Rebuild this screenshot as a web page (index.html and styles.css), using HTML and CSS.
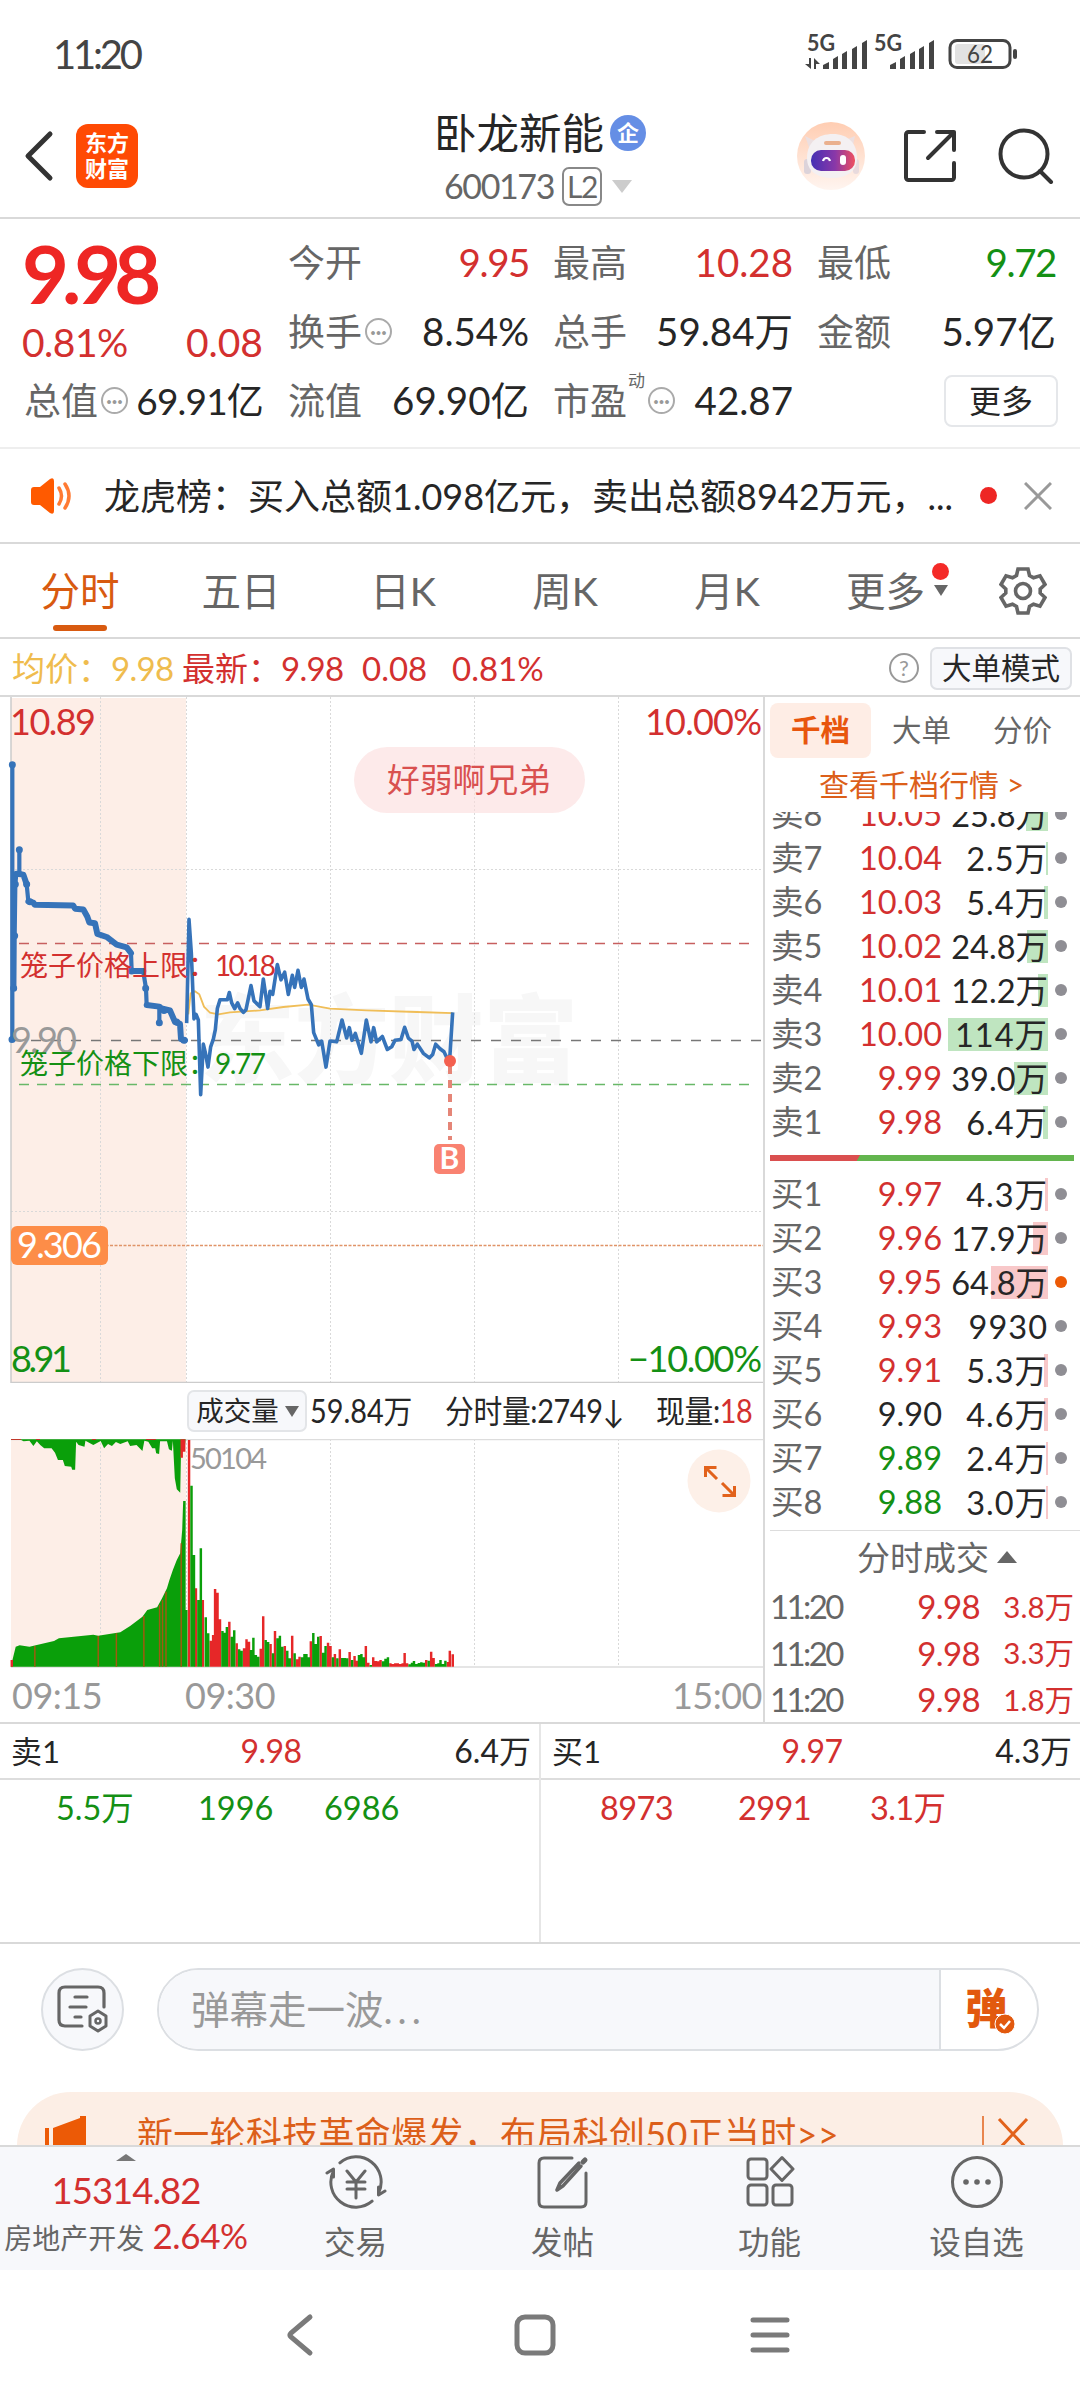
FILE: index.html
```html
<!DOCTYPE html>
<html lang="zh-CN">
<head>
  <meta charset="UTF-8" />
  <meta name="viewport" content="width=device-width, initial-scale=1.0"/>
  <title>卧龙新能 600173</title>
  <link rel="stylesheet" href="styles.css">
</head>
<body>

  <!-- Status bar -->
  <div class="status-bar">
    <span class="clock">11:20</span>
    <svg class="status-icons" width="216" height="40" viewBox="0 0 216 40" fill="#444">
      <text class="net" x="3" y="15" textLength="28" lengthAdjust="spacingAndGlyphs">5G</text>
      <path d="M1 28h4v-6h2v11zM10 33V22l6 6h-4v5z"/>
      <path d="M19 33v-4l6-3v7zM29 33V23l5-3v13zM38 33V18l5-3v18zM48 33V13l5-3v23zM58 33V7l5-3v29z"/>
      <text class="net" x="70" y="15" textLength="28" lengthAdjust="spacingAndGlyphs">5G</text>
      <path d="M86 33v-4l6-3v7zM96 33V23l5-3v13zM106 33V18l5-3v18zM115 33V13l5-3v23zM125 33V7l5-3v29z"/>
      <rect x="146" y="4.500" width="60" height="27" rx="7" fill="#fff" stroke="#444" stroke-width="3"/>
      <rect x="151" y="8" width="30" height="20" rx="3" fill="#e2e2e2"/>
      <rect x="209" y="13" width="4" height="10" rx="2"/>
      <text class="battery" x="163" y="27" textLength="26" lengthAdjust="spacingAndGlyphs">62</text>
    </svg>
  </div>

  <!-- Header -->
  <header class="header">
    <div class="header-left">
      <svg width="32" height="54" viewBox="0 0 32 54" fill="none" stroke="#333" stroke-width="5" stroke-linecap="round" stroke-linejoin="round"><path d="M27 5L5 27l22 22"/></svg>
      <div class="logo"><span>东方</span><span>财富</span></div>
    </div>
    <div class="header-title">
      <div class="stock-name">卧龙新能<span class="badge">企</span></div>
      <div class="stock-code">600173<span class="level">L2</span><i class="tri-down"></i></div>
    </div>
    <div class="header-right">
      <svg width="68" height="68" viewBox="0 0 68 68">
        <defs>
          <linearGradient id="halo" x1="0" y1="0" x2="0" y2="1"><stop offset="0" stop-color="#ffcdb2"/><stop offset="1" stop-color="#fff5f0"/></linearGradient>
          <linearGradient id="visor" x1="0" y1="0" x2="1" y2="0"><stop offset="0" stop-color="#4530b4"/><stop offset=".55" stop-color="#8a38a8"/><stop offset="1" stop-color="#ef5060"/></linearGradient>
        </defs>
        <circle cx="34" cy="34" r="34" fill="url(#halo)"/>
        <path d="M8 14l5 14 7-8zM58 14l-3 14-9-9z" fill="#ecdfe0"/>
        <rect x="7" y="37" width="7" height="15" rx="3" fill="#dcd3da"/>
        <rect x="56" y="37" width="6" height="15" rx="3" fill="#e8dadd"/>
        <path d="M10 36c0-16 11-24 26-24s24 9 24 24c0 13-10 20-25 20S10 49 10 36z" fill="#f4f0f2"/>
        <rect x="27" y="19" width="17" height="4" rx="2" fill="#eab08e"/>
        <rect x="14" y="28" width="44" height="21" rx="10" fill="url(#visor)"/>
        <path d="M26 39c1-4 6-4 7 0" fill="none" stroke="#fff" stroke-width="2.200"/>
        <rect x="43" y="33" width="6" height="10" rx="3" fill="#fff"/>
      </svg>
      <svg class="share" width="54" height="54" viewBox="0 0 54 54" fill="none" stroke="#333" stroke-width="4" stroke-linecap="round" stroke-linejoin="round">
        <path d="M21 3H5.500A2.500 2.500 0 0 0 3 5.500v43A2.500 2.500 0 0 0 5.500 51h43a2.500 2.500 0 0 0 2.500-2.500V34M34 3h17v18M51 3L25 29"/>
      </svg>
      <svg class="search" width="56" height="56" viewBox="0 0 56 56" fill="none" stroke="#333" stroke-width="4" stroke-linecap="round"><circle cx="26" cy="26" r="23.500"/><path d="M42 43l11 11"/></svg>
    </div>
  </header>

  <!-- Quote summary -->
  <section class="quote">
    <div class="quote-main">
      <div class="price">9.98</div>
      <div class="change"><span>0.81%</span><span>0.08</span></div>
      <div class="stat stat-total"><label>总值<i class="dots">···</i></label><b>69.91亿</b></div>
    </div>
    <div class="quote-grid">
      <div class="stat"><label>今开</label><b class="red short">9.95</b></div>
      <div class="stat"><label>最高</label><b class="red">10.28</b></div>
      <div class="stat"><label>最低</label><b class="green short">9.72</b></div>
      <div class="stat"><label>换手<i class="dots">···</i></label><b>8.54%</b></div>
      <div class="stat"><label>总手</label><b>59.84万</b></div>
      <div class="stat"><label>金额</label><b>5.97亿</b></div>
      <div class="stat"><label>流值</label><b>69.90亿</b></div>
      <div class="stat"><label>市盈<sup>动</sup><i class="dots">···</i></label><b>42.87</b></div>
      <div class="stat stat-end"><button class="more-btn">更多</button></div>
    </div>
  </section>

  <!-- News line -->
  <div class="news">
    <svg width="44" height="36" viewBox="0 0 44 36">
      <path d="M1 12q0-3 3-3h6L20 1q4-2 4 2v30q0 4-4 2l-10-8H4q-3 0-3-3z" fill="#ff5a00"/>
      <path d="M29 10q5 8 0 16M35 6q8 12 0 24" fill="none" stroke="#ff7a33" stroke-width="3.500" stroke-linecap="round"/>
    </svg>
    <span class="news-text">龙虎榜：买入总额1.098亿元，卖出总额8942万元，<i>...</i></span>
    <i class="red-dot"></i>
    <svg width="28" height="28" viewBox="0 0 28 28" stroke="#999" stroke-width="3"><path d="M1 1l26 26M27 1L1 27"/></svg>
  </div>

  <!-- Period tabs -->
  <nav class="tabs">
    <span class="tab tab-active">分时</span>
    <span class="tab">五日</span>
    <span class="tab">日K</span>
    <span class="tab">周K</span>
    <span class="tab">月K</span>
    <span class="tab tab-more">更多<i class="tab-dot"></i><i class="tab-tri"></i></span>
    <svg class="gear" width="48" height="48" viewBox="0 0 48 48" fill="none" stroke="#666" stroke-width="3.600" stroke-linejoin="miter">
      <path d="M19 2h10l1.500 6.500 4 2.300 6.500-2 5 8.700-4.800 4.500v4L46 30.500l-5 8.700-6.500-2-4 2.300L29 46H19l-1.500-6.500-4-2.300-6.500 2-5-8.700L6.800 26v-4L2 17.500l5-8.700 6.500 2 4-2.300z"/>
      <circle cx="24" cy="24" r="7.500"/>
    </svg>
  </nav>

  <!-- Price legend -->
  <div class="legend">
    <span class="avg">均价：</span><span class="avg num">9.98</span>
    <span class="red">最新：</span><span class="red num">9.98</span>
    <span class="red num gap">0.08</span>
    <span class="red num gap">0.81%</span>
    <i class="help">?</i>
    <button class="mode-btn">大单模式</button>
  </div>

  <main class="market">
    <div class="charts">
      <!-- Intraday price -->
      <svg class="price-chart" width="763" height="686" viewBox="0 0 763 686">
        <rect x="11" y="1" width="175" height="684" fill="#fdeee7"/>
        <text class="watermark" x="200" y="378" textLength="378" lengthAdjust="spacingAndGlyphs">东方财富</text>
        <g stroke="#d9d9d9" stroke-dasharray="2 2">
          <path d="M100.500 0v685M186.500 0v685M330.500 0v685M474.500 0v685M618.500 0v685M11 172.500h752M11 514.500h752"/>
        </g>
        <path d="M11 0v685.500h752" fill="none" stroke="#ccc" stroke-width="1.500"/>
        <path d="M19 246.500h730" stroke="#c75f5f" stroke-width="1.700" stroke-dasharray="10 8"/>
        <path d="M11 343.500h752" stroke="#777" stroke-width="1.700" stroke-dasharray="10 10"/>
        <path d="M19 387.500h730" stroke="#68b868" stroke-width="1.700" stroke-dasharray="10 8"/>
        <path d="M11 548.500h752" stroke="#e09468" stroke-width="1.500" stroke-dasharray="3 1.500"/>

        <svg class="price-lines" x="0" y="103" width="500" height="600" viewBox="0 0 1500 1568" preserveAspectRatio="none">
          <path class="avg-line" d="M565 560L572 505 585 500 598 508 612 540 630 556 655 560 690 555 780 550 850 541 925 535 990 545 1100 550 1250 554 1358 557"/>
          <path class="line open" d="M37-95V628M43 490L44 355 46 220 49 193 58 190V130 190L70 195 80 220 85 265"/>
          <path class="line auction" d="M49 193L70 195 80 220M85 265L100 268 104 274 220 276 225 284 250 286 262 305 268 320 285 322 292 350 320 358 350 378 380 385 393 400"/>
          <path class="line open" d="M393 400L395 447M430 450L438 492 440 536M478 540V582"/>
          <path class="line auction" d="M395 447H430M440 536L478 540 485 545 510 550 525 580 540 585 543 625 555 628"/>
          <path class="line dot" d="M37-92V-92M58 130V130M46 220V220M44 355V355M41 492V492M36 626V626M80 220V220M90 266V266M437 492V492M478 582V582M395 447V447M552 628V628M492 550V550M530 580V580"/>
          <path class="line" d="M560 583L567 312 574 400 582 572 588 560 595 575 602 770 610 638 616 660 624 698 632 645 640 625 646 600 652 545 660 522 682 522 688 503 695 530 704 545 713 530 720 545 730 555 738 548 753 485 762 525 780 540 790 468 803 545 810 500 818 508 832 430 843 470 854 450 865 508 877 458 884 490 894 445 904 490 912 468 924 520 934 535 941 608 956 640 965 630 978 698 990 630 1010 632 1026 575 1040 622 1048 595 1056 628 1066 610 1084 662 1099 575 1113 632 1121 595 1130 632 1147 618 1162 652 1175 645 1185 628 1203 626 1214 594 1225 622 1236 630 1242 652 1252 638 1270 662 1288 674 1298 665 1307 638 1320 650 1332 658 1345 682 1350 665 1358 555"/>
        </svg>

        <path d="M450 369v74" stroke="#e58577" stroke-width="4" stroke-dasharray="8 6"/>
        <circle cx="450" cy="364" r="6" fill="#f4604f"/>
        <rect x="434" y="447" width="31" height="30" rx="5" fill="#f98271"/>
        <text class="mark" x="449.500" y="472">B</text>

        <text class="axis red" x="10" y="38" textLength="86">10.89</text>
        <text class="axis red" x="645" y="38" textLength="117">10.00%</text>
        <text class="axis green" x="11" y="675" textLength="61">8.91</text>
        <text class="axis green" x="628" y="675" textLength="134">−10.00%</text>
        <text class="axis grey" x="11" y="356" textLength="66">9.90</text>
        <text class="cage red" x="20" y="279">笼子价格上限：</text>
        <text class="cage red" x="215" y="279" textLength="61">10.18</text>
        <text class="cage green" x="20" y="377">笼子价格下限：</text>
        <text class="cage green" x="215" y="377" textLength="51">9.77</text>
        <rect x="11" y="529" width="97" height="39" rx="6" fill="#fd8d48"/>
        <text class="axis white" x="17" y="561" textLength="85">9.306</text>
        <rect x="354" y="50" width="231" height="66" rx="33" fill="#fbdcdc" opacity=".6"/>
        <text class="bullet" x="387" y="95">好弱啊兄弟</text>
      </svg>

      <!-- Volume -->
      <div class="volume-bar">
        <button class="volume-btn"><span>成交量</span><i></i></button>
        <span class="narrow total">59.84万</span>
        <span class="narrow minute">分时量:2749↓</span>
        <span class="narrow now">现量:<b class="red">18</b></span>
      </div>
      <svg class="volume-chart" width="763" height="231" viewBox="0 0 763 231">
        <rect x="11" y="1" width="175" height="227" fill="#fdeee7"/>
        <path d="M100.500 0v228M186.500 0v228M330.500 0v228M474.500 0v228M618.500 0v228" stroke="#d9d9d9" stroke-dasharray="2 2"/>
        <path d="M11 .500h752M11 228h752" stroke="#ddd" stroke-width="1.500"/>
        <svg x="0" y="-69" width="770" height="360" viewBox="0 0 1568 1080" preserveAspectRatio="none">
          <path fill="#0a9f0a" d="M40 208L48 214 60 212 68 228 75 214 82 225 90 235H105L112 248 118 270H128L132 288 145 290 147 299H153L155 215 160 225 172 230 174 212 190 225 205 213 212 235 220 222 228 228 236 216 245 222 260 214 265 228 278 225 290 243 294 212 302 215 310 235 316 235 318 250 324 252 326 214H340L344 238 350 242 352 212 356 325 360 358 367 368 369 215 376 235 378 208z"/>
          <path fill="#0a9f0a" d="M22 890L32 830 40 826 60 830 75 825 110 813 120 805 150 800 190 794 200 797 245 787 265 768 290 740 300 720 320 712 330 685 340 655 345 630 352 600 360 570 367 550 371 480 373 393H378V720H382V890z"/>
          <path class="bar stripe" d="M71 890V828M200 890V798M237 890V790M293 890V738M325 890V705M331 890V690M338 890V665M369 890V520"/>
          <path class="bar up" d="M370 208V263M375 208V245M24 890V870"/>
          <path class="bar up" d="M385 890V210M399 890V655M413 890V690M429 890V812M434 890V795M438 890V657M443 890V668M448 890V748M467 890V755M482 890V820M497 890V835M502 890V808M507 890V815M531 890V836M536 890V739M551 890V822M560 890V783M580 890V828M595 890V797M605 890V868M610 890V860M633 890V814M653 890V798M668 890V818M673 890V828M682 890V852M692 890V838M712 890V846M722 890V858M727 890V872M745 890V828M750 890V878M760 890V862M765 890V873M770 890V874M775 890V870M795 890V880M800 890V882M805 890V880M810 890V880M815 890V882M820 890V880M824 890V849M829 890V880M868 890V870M878 890V845M883 890V864M912 890V876M916 890V842M922 890V853"/>
          <path class="bar down" d="M390 890V347M395 890V555M404 890V690M409 890V535M419 890V742M424 890V790M453 890V783M458 890V788M462 890V771M472 890V800M477 890V781M487 890V838M492 890V842M511 890V840M516 890V803M521 890V855M526 890V860M541 890V810M546 890V816M556 890V850M565 890V805M570 890V797M575 890V830M585 890V842M590 890V865M600 890V850M615 890V862M620 890V852M624 890V852M629 890V862M638 890V789M643 890V822M648 890V800M658 890V848M663 890V828M678 890V862M687 890V865M697 890V864M702 890V864M707 890V865M717 890V870M731 890V855M736 890V852M741 890V862M755 890V885M780 890V874M785 890V866M790 890V862M834 890V883M839 890V878M843 890V873M848 890V882M853 890V879M858 890V877M863 890V878M873 890V872M888 890V882M893 890V880M897 890V870M902 890V882M907 890V872"/>
        </svg>
        <path d="M11 .500h10M36 .500h4M92 .500h4M146 .500h10" stroke="#c0392b"/>
        <text class="vol-max" x="190" y="30" textLength="77">50104</text>
        <circle cx="719" cy="42" r="31.500" fill="#fdf0e8"/>
        <path d="M705.500 38V28.500h11M706 29l11 11M734.500 47v9.500h-12M734 56l-12-12" fill="none" stroke="#e2621b" stroke-width="3"/>
      </svg>
      <div class="times"><span>09:15</span><span>09:30</span><span>15:00</span></div>
    </div>

    <!-- Order book -->
    <aside class="book">
      <div class="book-tabs"><span class="on">千档</span><span>大单</span><span>分价</span></div>
      <a class="book-link">查看千档行情 &gt;</a>
      <div class="sells">
        <div class="row"><span>卖8</span><b class="red">10.05</b><em class="wide"><i style="width:22px"></i>25.8万</em><u></u></div>
        <div class="row"><span>卖7</span><b class="red">10.04</b><em><i style="width:2px"></i>2.5万</em><u></u></div>
        <div class="row"><span>卖6</span><b class="red">10.03</b><em><i style="width:4px"></i>5.4万</em><u></u></div>
        <div class="row"><span>卖5</span><b class="red">10.02</b><em class="wide"><i style="width:21px"></i>24.8万</em><u></u></div>
        <div class="row"><span>卖4</span><b class="red">10.01</b><em class="wide"><i style="width:10px"></i>12.2万</em><u></u></div>
        <div class="row"><span>卖3</span><b class="red">10.00</b><em><i style="width:100px"></i>114万</em><u></u></div>
        <div class="row"><span>卖2</span><b class="red">9.99</b><em class="wide"><i style="width:34px"></i>39.0万</em><u></u></div>
        <div class="row"><span>卖1</span><b class="red">9.98</b><em><i style="width:5px"></i>6.4万</em><u></u></div>
      </div>
      <div class="ratio"></div>
      <div class="buys">
        <div class="row"><span>买1</span><b class="red">9.97</b><em><i style="width:3px"></i>4.3万</em><u></u></div>
        <div class="row"><span>买2</span><b class="red">9.96</b><em class="wide"><i style="width:15px"></i>17.9万</em><u></u></div>
        <div class="row"><span>买3</span><b class="red">9.95</b><em class="wide"><i style="width:57px"></i>64.8万</em><u class="hot"></u></div>
        <div class="row"><span>买4</span><b class="red">9.93</b><em>9930</em><u></u></div>
        <div class="row"><span>买5</span><b class="red">9.91</b><em><i style="width:4px"></i>5.3万</em><u></u></div>
        <div class="row"><span>买6</span><b>9.90</b><em><i style="width:4px"></i>4.6万</em><u></u></div>
        <div class="row"><span>买7</span><b class="green">9.89</b><em><i style="width:2px"></i>2.4万</em><u></u></div>
        <div class="row"><span>买8</span><b class="green">9.88</b><em><i style="width:2px"></i>3.0万</em><u></u></div>
      </div>
      <div class="deals-title">分时成交<i></i></div>
      <div class="deal"><span>11:20</span><b>9.98</b><em>3.8万</em></div>
      <div class="deal"><span>11:20</span><b>9.98</b><em>3.3万</em></div>
      <div class="deal"><span>11:20</span><b>9.98</b><em>1.8万</em></div>
    </aside>
  </main>

  <!-- Level 2 queue -->
  <section class="queue">
    <div class="queue-col">
      <div class="queue-head"><span>卖1</span><b>9.98</b><em>6.4万</em></div>
      <div class="queue-list green"><span>5.5万</span><span>1996</span><span>6986</span></div>
    </div>
    <div class="queue-col">
      <div class="queue-head"><span>买1</span><b>9.97</b><em>4.3万</em></div>
      <div class="queue-list red"><span>8973</span><span>2991</span><span>3.1万</span></div>
    </div>
  </section>

  <!-- Comment input -->
  <div class="comment">
    <div class="comment-set">
      <svg width="52" height="50" viewBox="0 0 52 50" fill="none" stroke="#666" stroke-width="3.200" stroke-linecap="round" stroke-linejoin="round">
        <path d="M25 41H8q-6 0-6-6V8q0-6 6-6h33q6 0 6 6v14M18 12h12M13 22h16M18 32h6"/>
        <path d="M41 26l8 5v10l-8 5-8-5V31z" stroke-width="3"/><circle cx="41" cy="36" r="2.500" stroke-width="2.500"/>
      </svg>
    </div>
    <div class="comment-box">
      <span class="placeholder">弹幕走一波<i>...</i></span>
      <span class="danmu">弹<svg width="22" height="22" viewBox="0 0 22 22"><circle cx="11" cy="11" r="10" fill="#e2590e" stroke="#fff"/><path d="M6 11l4 4 6-7" fill="none" stroke="#fff" stroke-width="2.500"/></svg></span>
    </div>
  </div>

  <!-- Promo strip, cut by the bottom bar -->
  <div class="promo-wrap">
    <div class="promo">
      <svg width="44" height="40" viewBox="0 0 44 40" fill="#ec5a06"><path d="M1 12h4v17H1zM9 12L36 2V0h6v40h-6v-3L9 29z"/></svg>
      <span>新一轮科技革命爆发，布局科创50正当时&gt;&gt;</span>
      <svg class="promo-x" width="48" height="44" viewBox="0 0 48 44" stroke="#e2621b" fill="none"><path d="M1 0v44" stroke-width="1.500"/><path d="M17 3l28 30M45 3L17 33" stroke-width="3"/></svg>
    </div>
  </div>

  <!-- Bottom bar -->
  <footer class="bottom">
    <div class="index">
      <i class="index-tri"></i>
      <div class="index-value">15314.82</div>
      <div class="index-name">房地产开发 <b>2.64%</b></div>
    </div>
    <div class="action">
      <svg width="62" height="56" viewBox="0 0 62 56" fill="none" stroke="#666" stroke-width="3" stroke-linecap="round" stroke-linejoin="round">
        <path d="M14.900 8.800A25 25 0 0 1 53.700 38.600M47.100 47.200A25 25 0 0 1 8.300 17.400M2 19l6.500-4v8M60 37l-6.500 4v-8M22 17l9 11 9-11M31 28v16M22 28h18M22 35h18"/>
      </svg>
      <span>交易</span>
    </div>
    <div class="action">
      <svg width="54" height="56" viewBox="0 0 54 56" fill="none" stroke="#666" stroke-width="3" stroke-linecap="round">
        <path d="M36 4H8q-5 0-5 5v39q0 5 5 5h37q5 0 5-5V19"/><path d="M21 36l3-7 19-20M21 36l6-4 18-20" stroke-width="3.500"/><path d="M47 8l2-2" stroke-width="5"/>
      </svg>
      <span>发帖</span>
    </div>
    <div class="action">
      <svg width="50" height="56" viewBox="0 0 50 56" fill="none" stroke="#666" stroke-width="3" stroke-linejoin="round">
        <rect x="3" y="5" width="19" height="20" rx="3"/><rect x="3" y="31" width="19" height="20" rx="3"/><rect x="28" y="31" width="19" height="20" rx="3"/><path d="M37 3.500L48 15 37 26.500 26 15z"/>
      </svg>
      <span>功能</span>
    </div>
    <div class="action">
      <svg width="56" height="56" viewBox="0 0 56 56" fill="#666"><circle cx="28" cy="28" r="24.500" fill="none" stroke="#666" stroke-width="3"/><circle cx="17" cy="28" r="2.800"/><circle cx="28" cy="28" r="2.800"/><circle cx="39" cy="28" r="2.800"/></svg>
      <span>设自选</span>
    </div>
  </footer>

  <!-- System navigation -->
  <div class="sys-nav">
    <svg width="30" height="44" viewBox="0 0 30 44"><path d="M26 4L7 20q-2 2 0 4l19 16"/></svg>
    <svg width="44" height="44" viewBox="0 0 44 44"><rect x="4" y="4" width="36" height="36" rx="8"/></svg>
    <svg width="44" height="44" viewBox="0 0 44 44"><path d="M5 7h34M5 22h34M5 37h34"/></svg>
  </div>

</body>
</html>
```
FILE: styles.css
```css
* {
  box-sizing: border-box;
}

body {
  margin: 0;
  width: 1080px;
  height: 2400px;
  overflow: hidden;
  background: #fff;
  color: #262626;
  font-family: Lato, "Noto Sans CJK SC", sans-serif;
  line-height: 1;
}

b, em, i, u {
  font-weight: normal;
  font-style: normal;
  text-decoration: none;
}

button {
  font-family: inherit;
  line-height: 1;
  padding: 0;
  color: #262626;
}

svg {
  display: block;
  flex: none;
}

.red { color: #d3302f; fill: #d3302f; }
.green { color: #149014; fill: #149014; }
.grey { fill: #999; }
.white { fill: #fff; }

/* Status bar */
.status-bar {
  height: 108px;
  padding: 33px 60px 0 53px;
  display: flex;
  justify-content: space-between;
}

.status-icons {
  margin-top: 3px;
  overflow: visible;
}

.clock {
  font-size: 40px;
  line-height: 42px;
  letter-spacing: -3.2px;
  color: #444;
}

.net { font-size: 22px; font-weight: bold; }
.battery { font-size: 25px; }

/* Header */
.header {
  height: 111px;
  border-bottom: 2px solid #d9d9d9;
  display: grid;
  grid-template-columns: 360px 1fr 360px;
}

.header-left {
  display: flex;
  align-items: center;
  padding: 0 0 14px 23px;
  gap: 21px;
}

.logo {
  width: 62px;
  height: 64px;
  border-radius: 12px;
  background: #ff4a04;
  color: #fff;
  font-size: 22px;
  font-weight: bold;
  line-height: 26px;
  display: flex;
  flex-direction: column;
  align-items: center;
  justify-content: center;
}

.header-title {
  padding-top: 1px;
  display: flex;
  flex-direction: column;
  align-items: center;
}

.stock-name {
  display: flex;
  align-items: center;
  font-size: 42.5px;
  height: 48px;
}

.badge {
  width: 36px;
  height: 36px;
  margin-left: 6px;
  border-radius: 50%;
  background: #658ee5;
  color: #fff;
  font-size: 22px;
  font-weight: bold;
  line-height: 35px;
  text-align: center;
}

.stock-code {
  display: flex;
  align-items: center;
  height: 40px;
  margin-top: 9px;
  margin-right: 4px;
  font-size: 34px;
  letter-spacing: -1.4px;
  color: #666;
}

.level {
  margin-left: 8px;
  width: 40px;
  height: 39px;
  border: 2px solid #888;
  border-radius: 7px;
  font-size: 30px;
  line-height: 35px;
  text-align: center;
}

.tri-down {
  margin-left: 10px;
  border: 10px solid transparent;
  border-top: 13px solid #ccc;
  border-bottom: 0;
}

.header-right {
  display: flex;
  align-items: center;
  margin-left: 77px;
  padding-bottom: 14px;
}

.share { margin-left: 38px; }
.search { margin-left: 41px; }

/* Quote summary */
.quote {
  height: 230px;
  border-bottom: 2px solid #eee;
  padding: 9px 24px 0;
  display: grid;
  grid-template-columns: 239px 1fr;
  column-gap: 25px;
}

.quote-grid {
  display: grid;
  grid-template-columns: 241px 240px 239px;
  grid-auto-rows: 69px;
  column-gap: 24px;
}

.price {
  height: 92px;
  padding-top: 6px;
  margin-left: -2px;
  font-size: 81px;
  font-weight: bold;
  letter-spacing: -7px;
  line-height: 78px;
  color: #ee2624;
}

.change {
  height: 46px;
  display: flex;
  justify-content: space-between;
  align-items: center;
  padding-bottom: 2px;
  margin-left: -2px;
  font-size: 39px;
  color: #d3302f;
}

.change span:first-child { letter-spacing: -.5px; }

.stat {
  height: 69px;
  display: flex;
  justify-content: space-between;
  align-items: center;
  font-size: 37px;
  white-space: nowrap;
}

.stat label {
  display: flex;
  align-items: center;
  color: #666;
}

.stat b { font-size: 38.5px; }
.stat .short { letter-spacing: -1.4px; }
.stat-total b { font-size: 37px; letter-spacing: -.8px; }
.stat-end { justify-content: flex-end; }

.stat sup {
  font-size: 17px;
  align-self: flex-start;
  margin-top: -10px;
  margin-left: 1px;
}

.dots {
  width: 27px;
  height: 27px;
  margin-left: 3px;
  border: 2px solid #aaa;
  border-radius: 50%;
  color: #999;
  font-size: 20px;
  line-height: 22px;
  font-weight: bold;
  text-align: center;
}

.more-btn {
  width: 114px;
  height: 52px;
  margin-right: -2px;
  border: 2px solid #e5e7ea;
  border-radius: 8px;
  background: #fff;
  font-size: 32px;
}

/* News line */
.news {
  height: 95px;
  border-bottom: 2px solid #d9d9d9;
  padding: 0 28px 0 30px;
  display: flex;
  align-items: center;
}

.news-text {
  width: 876px;
  margin-left: 30px;
  font-size: 36px;
  white-space: nowrap;
}

.red-dot {
  width: 17px;
  height: 17px;
  border-radius: 50%;
  background: #ee2624;
  margin-right: 27px;
}

/* Period tabs */
.tabs {
  position: relative;
  height: 95px;
  border-bottom: 2px solid #d9d9d9;
  display: flex;
  align-items: center;
  font-size: 39.5px;
  color: #666;
}

.tab {
  width: 162px;
  height: 93px;
  line-height: 93px;
  text-align: center;
}

.tab-active {
  position: relative;
  width: 160px;
  color: #d85a10;
}

.tab-active::after {
  content: "";
  position: absolute;
  left: 53px;
  bottom: 6px;
  width: 54px;
  height: 6px;
  border-radius: 3px;
  background: #d85a10;
}

.tab-more {
  position: relative;
  width: 152px;
  text-align: left;
  padding-left: 38px;
}

.tab-dot {
  position: absolute;
  left: 124px;
  top: 19px;
  width: 17px;
  height: 17px;
  border-radius: 50%;
  background: #f42a28;
}

.tab-tri {
  position: absolute;
  left: 126px;
  top: 41px;
  border: 7px solid transparent;
  border-top: 11px solid #666;
  border-bottom: 0;
}

.gear { margin-left: 39px; }

/* Price legend */
.legend {
  height: 58px;
  border-bottom: 2px solid #d9d9d9;
  padding: 2px 8px 0 12px;
  display: flex;
  align-items: center;
  font-size: 33px;
}

.legend .num { width: 69px; margin-right: 2px; letter-spacing: -.7px; }
.legend .gap { margin-left: 10px; letter-spacing: 0; }
.legend .gap + .gap { width: 100px; margin-left: 19px; }
.avg { color: #efbc4e; }

.help {
  width: 30px;
  height: 30px;
  margin-left: auto;
  border: 2.5px solid #999;
  border-radius: 50%;
  color: #999;
  font-size: 22px;
  line-height: 25px;
  text-align: center;
}

.mode-btn {
  width: 142px;
  height: 43px;
  margin-left: 11px;
  border: 2px solid #dfe1e5;
  border-radius: 7px;
  background: #f7f8fb;
  font-size: 29.5px;
}

/* Charts */
.market {
  height: 1027px;
  border-bottom: 2px solid #d9d9d9;
  display: flex;
}

.charts { width: 763px; }

.price-lines { overflow: visible; }

.watermark {
  font-size: 96px;
  font-weight: 900;
  fill: #f7f7f7;
}

.line {
  fill: none;
  stroke: #3673b9;
  stroke-width: 3.6;
  stroke-linejoin: round;
  vector-effect: non-scaling-stroke;
}

.open { stroke-width: 4.2; }
.auction { stroke-width: 6; stroke-linecap: round; }
.dot { stroke-width: 7; stroke-linecap: round; }

.avg-line {
  fill: none;
  stroke: #f0be58;
  stroke-width: 1.8;
  vector-effect: non-scaling-stroke;
}

.axis { font-size: 36px; }
.cage { font-size: 28px; }

.mark {
  font-size: 30px;
  font-weight: bold;
  fill: #fff;
  text-anchor: middle;
}

.bullet {
  font-size: 32.8px;
  fill: #d9504f;
}

.volume-bar {
  height: 56px;
  padding-left: 187px;
  display: flex;
  align-items: center;
  font-size: 32px;
}

.volume-btn {
  width: 121px;
  height: 42px;
  border: 2px solid #e3e5e8;
  border-radius: 7px;
  background: #f7f8fb;
  display: flex;
  align-items: center;
  font-size: 27.5px;
  padding-left: 7px;
}

.volume-btn span { width: 83px; }

.volume-btn i {
  margin-left: 6px;
  border: 7px solid transparent;
  border-top: 11px solid #666;
  border-bottom: 0;
}

.narrow {
  display: block;
  transform: scaleX(.9);
  transform-origin: left;
  white-space: nowrap;
}

.total { width: 136px; margin-left: 3px; }
.minute { width: 213px; letter-spacing: -.4px; }
.now { letter-spacing: -.4px; }

.volume-chart { overflow: hidden; }

.bar {
  fill: none;
  stroke-width: 5;
}

.up { stroke: #e62728; }
.down { stroke: #0a9f0a; }
.stripe { stroke: #a05a10; stroke-width: 3; }

.vol-max { font-size: 29px; fill: #999; }

.times {
  display: grid;
  grid-template-columns: 173px 1fr auto;
  padding: 6px 1px 0 12px;
  font-size: 36px;
  line-height: 38px;
  letter-spacing: -.5px;
  color: #999;
}

/* Order book */
.book {
  width: 317px;
  border-left: 2px solid #d9d9d9;
  padding-left: 5px;
}

.book-tabs {
  display: flex;
  margin-top: 6px;
  height: 55px;
  font-size: 29.5px;
  line-height: 54px;
  text-align: center;
  color: #666;
}

.book-tabs span { width: 101px; }

.book-tabs .on {
  border-radius: 8px;
  background: #feede5;
  color: #e8560d;
  font-weight: bold;
}

.book-link {
  display: block;
  height: 54px;
  padding-left: 49px;
  font-size: 30px;
  line-height: 53px;
  color: #dc5f1a;
  white-space: nowrap;
}

.sells {
  height: 332px;
  overflow: hidden;
  display: flex;
  flex-direction: column;
  justify-content: flex-end;
}

.row {
  flex: none;
  height: 44px;
  display: grid;
  grid-template-columns: 70px 102px 106px 1fr;
  align-items: center;
  font-size: 32.5px;
}

.row span { color: #666; padding-left: 1px; white-space: nowrap; }
.row b, .row em { text-align: right; white-space: nowrap; }

.row em {
  position: relative;
  height: 33px;
  line-height: 33px;
  letter-spacing: 1px;
  z-index: 0;
}

.row .wide { letter-spacing: 0; }

/* depth bar behind the volume */
.row em i {
  position: absolute;
  right: 0;
  top: 0;
  height: 33px;
  background: #bfe5c0;
  z-index: -1;
}

.buys .row em i { background: #f8c8c9; }

.row u {
  width: 12px;
  height: 12px;
  margin-left: 7px;
  border-radius: 50%;
  background: #8f8e94;
}

.row .hot { background: #ec5a06; }

.ratio {
  width: 304px;
  height: 6px;
  margin: 11px 0;
  background: linear-gradient(120deg, #da4f4f 29.2%, #63b54e 29.4%);
}

.buys {
  height: 359px;
  border-bottom: 1px solid #ddd;
}

.deals-title {
  height: 52px;
  padding-left: 87px;
  display: flex;
  align-items: center;
  font-size: 33px;
  color: #666;
}

.deals-title i {
  margin-left: 8px;
  border: 10px solid transparent;
  border-bottom: 12px solid #666;
  border-top: 0;
}

.deal {
  height: 46.7px;
  display: grid;
  grid-template-columns: 90px 120px 94px;
  align-items: center;
  font-size: 33px;
  color: #d3302f;
}

.deal span { color: #666; letter-spacing: -2.6px; }
.deal b, .deal em { text-align: right; }
.deal b { letter-spacing: -.6px; }
.deal em { font-size: 29.5px; }

/* Level 2 queue */
.queue {
  height: 220px;
  border-bottom: 2px solid #d9d9d9;
  display: flex;
}

.queue-col { width: 539px; }
.queue-col + .queue-col { width: 541px; border-left: 2px solid #e6e6e6; }

.queue-head {
  height: 56px;
  border-bottom: 2px solid #ddd;
  padding: 0 8px 0 11px;
  display: grid;
  grid-template-columns: 1fr 120px 1fr;
  align-items: center;
  font-size: 31px;
}

.queue-head b { text-align: center; color: #d3302f; font-size: 32px; letter-spacing: -.6px; }
.queue-head em { text-align: right; font-size: 32px; }

.queue-list {
  display: flex;
  height: 56px;
  align-items: center;
  padding-left: 56px;
  font-size: 32.5px;
}

.queue-list span:nth-child(1) { width: 142px; }
.queue-list span:nth-child(2) { width: 126px; }
.queue-list.red { padding-left: 59px; letter-spacing: -.6px; }
.queue-list.red span:nth-child(1) { width: 138px; }
.queue-list.red span:nth-child(2) { width: 132px; }

/* Comment input */
.comment {
  height: 148px;
  padding: 24px 41px 0;
  display: flex;
  gap: 33px;
}

.comment-set {
  width: 83px;
  height: 83px;
  border: 2px solid #dcdfe3;
  border-radius: 50%;
  background: #f7f8fb;
  display: flex;
  align-items: center;
  justify-content: center;
}

.comment-box {
  width: 882px;
  height: 83px;
  border: 2px solid #dcdfe3;
  border-radius: 42px;
  overflow: hidden;
  display: flex;
}

.placeholder {
  width: 784px;
  padding-left: 32px;
  background: #f7f8fb;
  border-right: 2px solid #dcdfe3;
  color: #999;
  font-size: 38.5px;
  line-height: 79px;
}

.placeholder i { letter-spacing: 5px; }

.danmu {
  position: relative;
  width: 96px;
  padding-left: 24px;
  font-size: 42px;
  font-weight: 900;
  line-height: 76px;
  color: #e2590e;
}

.danmu svg {
  position: absolute;
  left: 53px;
  top: 43px;
}

/* Promo strip */
.promo-wrap {
  height: 53px;
  overflow: hidden;
}

.promo {
  height: 108px;
  margin: 0 17px;
  padding: 24px 0 0 27px;
  border-radius: 54px;
  background: #fceee5;
  display: flex;
  align-items: flex-start;
}

.promo span {
  width: 845px;
  margin-left: 49px;
  font-size: 36px;
  letter-spacing: .3px;
  color: #dc5f1a;
  white-space: nowrap;
}

/* Bottom bar */
.bottom {
  height: 125px;
  border-top: 2px solid #d9d9d9;
  background: #f7f8fb;
  display: flex;
}

.index {
  width: 252px;
  display: flex;
  flex-direction: column;
  align-items: center;
}

.index-tri {
  margin-top: 7px;
  border: 10px solid transparent;
  border-bottom: 7px solid #777;
  border-top: 0;
}

.index-value {
  margin-top: 9px;
  font-size: 36.5px;
  line-height: 40px;
  letter-spacing: -1px;
  color: #d3302f;
}

.index-name {
  margin-top: 5px;
  font-size: 28px;
  line-height: 40px;
  color: #666;
  white-space: nowrap;
}

.index-name b { font-size: 35px; color: #d3302f; letter-spacing: -.4px; margin-left: 1px; }

.action {
  width: 207px;
  display: flex;
  flex-direction: column;
  align-items: center;
  padding-top: 7px;
  gap: 17px;
  font-size: 31.5px;
  color: #666;
}

/* System navigation */
.sys-nav {
  height: 130px;
  padding-left: 284px;
  display: flex;
  align-items: center;
}

.sys-nav svg {
  fill: none;
  stroke: #7a7a7a;
  stroke-width: 5;
  stroke-linecap: round;
}

.sys-nav svg + svg { margin-left: 199px; }
.sys-nav svg + svg + svg { margin-left: 191px; }
```
